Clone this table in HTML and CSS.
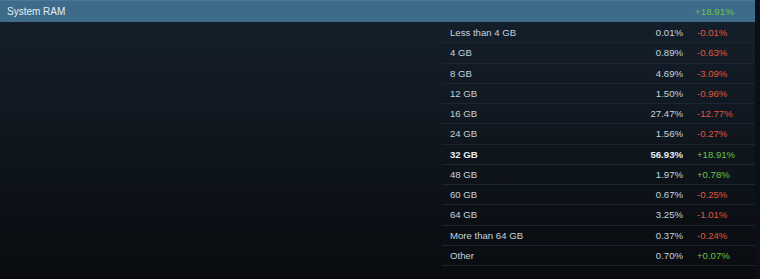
FILE: index.html
```html
<!DOCTYPE html>
<html>
<head>
<meta charset="utf-8">
<link rel="stylesheet" href="styles.css">
</head>
<body>
<div class="panel">
  <div class="header">
    <div class="title">System RAM</div>
    <div class="hchange pos">+18.91%</div>
  </div>
  <div class="content">
    <div class="spacer"></div>
    <div class="table">
      <div class="row"><span class="label">Less than 4 GB</span><span class="pct">0.01%</span><span class="chg neg">-0.01%</span></div>
      <div class="row"><span class="label">4 GB</span><span class="pct">0.89%</span><span class="chg neg">-0.63%</span></div>
      <div class="row"><span class="label">8 GB</span><span class="pct">4.69%</span><span class="chg neg">-3.09%</span></div>
      <div class="row"><span class="label">12 GB</span><span class="pct">1.50%</span><span class="chg neg">-0.96%</span></div>
      <div class="row"><span class="label">16 GB</span><span class="pct">27.47%</span><span class="chg neg">-12.77%</span></div>
      <div class="row"><span class="label">24 GB</span><span class="pct">1.56%</span><span class="chg neg">-0.27%</span></div>
      <div class="row bold"><span class="label">32 GB</span><span class="pct">56.93%</span><span class="chg pos">+18.91%</span></div>
      <div class="row"><span class="label">48 GB</span><span class="pct">1.97%</span><span class="chg pos">+0.78%</span></div>
      <div class="row"><span class="label">60 GB</span><span class="pct">0.67%</span><span class="chg neg">-0.25%</span></div>
      <div class="row"><span class="label">64 GB</span><span class="pct">3.25%</span><span class="chg neg">-1.01%</span></div>
      <div class="row"><span class="label">More than 64 GB</span><span class="pct">0.37%</span><span class="chg neg">-0.24%</span></div>
      <div class="row"><span class="label">Other</span><span class="pct">0.70%</span><span class="chg pos">+0.07%</span></div>
    </div>
  </div>
</div>
</body>
</html>
```
FILE: styles.css
```css
html, body {
  margin: 0;
  padding: 0;
  height: 279px;
  overflow: hidden;
  background: #0c1016;
  font-family: "Liberation Sans", Arial, sans-serif;
  font-size: 9.6px;
  color: #c6d4df;
}
.panel {
  width: 755px;
  height: 279px;
  background: linear-gradient(to bottom, #15202c 0%, #0e141b 60%, #090b0f 100%);
}
.header {
  display: flex;
  align-items: center;
  height: 22px;
  background: #3f6b8b;
  border-top: 1px solid #4b7899;
  box-sizing: border-box;
}
.title {
  flex: 1;
  padding-left: 7px;
  color: #e2ebf2;
  font-size: 10px;
}
.hchange {
  width: 60px;
  font-size: 9.8px;
}
.content {
  display: flex;
  padding-top: 1px;
}
.spacer {
  width: 442px;
}
.table {
  width: 313px;
}
.row {
  display: flex;
  align-items: center;
  height: 19.25px;
  border-bottom: 1px solid #1c2631;
}
.label {
  flex: 1;
  padding-left: 8px;
}
.pct {
  width: 80px;
  text-align: right;
}
.chg {
  width: 58px;
  padding-left: 14px;
}
.pos { color: #66c443; }
.neg { color: #e0563b; }
.bold { font-weight: bold; }
.bold .label, .bold .pct { color: #e8eef3; }
.bold .chg { font-weight: normal; }
```
